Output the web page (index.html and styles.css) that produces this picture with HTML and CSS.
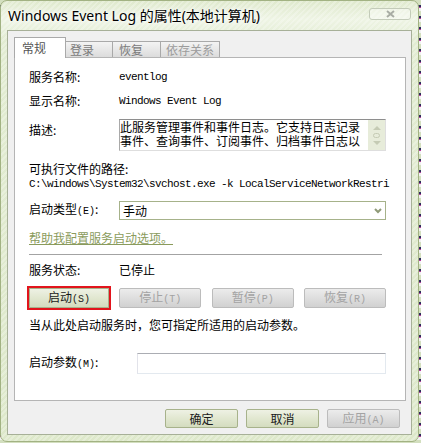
FILE: index.html
```html
<!DOCTYPE html>
<html lang="zh-CN">
<head>
    <meta charset="UTF-8">
    <meta name="viewport" content="width=device-width, initial-scale=1.0">
    <title>Windows Event Log 的属性(本地计算机)</title>
    <link rel="stylesheet" href="styles.css">
</head>
<body>

<div class="window">
    <div class="titlebar">
        <span class="title">Windows Event Log 的属性(本地计算机)</span>
        <span class="close-btn">
            <svg width="9" height="8" viewBox="0 0 9 8"><path d="M1 1 L8 7 M8 1 L1 7" stroke="#a8aca4" stroke-width="2" fill="none"/></svg>
        </span>
    </div>

    <div class="dialog">
        <div class="tabs">
            <div class="tab active">常规</div>
            <div class="tab tab-logon">登录</div>
            <div class="tab tab-recover">恢复</div>
            <div class="tab tab-deps">依存关系</div>
        </div>

        <div class="tab-panel">
            <div class="row">
                <span class="label">服务名称:</span>
                <span class="mono">eventlog</span>
            </div>
            <div class="row gap12">
                <span class="label">显示名称:</span>
                <span class="mono">Windows Event Log</span>
            </div>
            <div class="row desc-row gap12">
                <span class="label desc-label">描述:</span>
                <div class="desc-box">
                    <div class="desc-text">此服务管理事件和事件日志。它支持日志记录<br>事件、查询事件、订阅事件、归档事件日志以</div>
                    <div class="scrollbar">
                        <span class="arrow-up"></span>
                        <span class="grip"></span>
                        <span class="arrow-down"></span>
                    </div>
                </div>
            </div>

            <div class="path-label">可执行文件的路径:</div>
            <div class="path mono">C:\windows\System32\svchost.exe -k LocalServiceNetworkRestri</div>

            <div class="row type-row">
                <span class="label">启动类型<span class="acc">(E)</span>:</span>
                <div class="select">
                    <span>手动</span>
                    <svg width="8" height="6" viewBox="0 0 8 6"><path d="M1 1 L4 4 L7 1" stroke="#8f9a78" stroke-width="2" fill="none"/></svg>
                </div>
            </div>

            <div class="help-link">帮助我配置服务启动选项。</div>

            <div class="separator"></div>

            <div class="row status-row">
                <span class="label">服务状态:</span>
                <span>已停止</span>
            </div>

            <div class="service-buttons">
                <button class="btn btn-start">启动<span class="acc">(S)</span></button>
                <button class="btn" disabled>停止<span class="acc">(T)</span></button>
                <button class="btn" disabled>暂停<span class="acc">(P)</span></button>
                <button class="btn" disabled>恢复<span class="acc">(R)</span></button>
            </div>

            <div class="hint">当从此处启动服务时，您可指定所适用的启动参数。</div>

            <div class="row param-row">
                <span class="label param-label">启动参数<span class="acc">(M)</span>:</span>
                <input type="text" class="param-input">
            </div>
        </div>

        <div class="dialog-buttons">
            <button class="btn btn-small">确定</button>
            <button class="btn btn-small">取消</button>
            <button class="btn btn-small" disabled>应用<span class="acc">(A)</span></button>
        </div>
    </div>
</div>

</body>
</html>
```

FILE: styles.css
```css
/* Win7 style service properties dialog */
body {
    margin: 0;
    width: 421px;
    height: 443px;
    overflow: hidden;
    font-family: "Noto Sans CJK SC", sans-serif;
    font-size: 12px;
    color: #000;
    background: repeating-linear-gradient(to bottom, #d3dfbf 0, #d3dfbf 5px, #2e2e5c 5px, #2e2e5c 7px, #b43c9c 7px, #b43c9c 8px, #f2f2f2 8px, #f2f2f2 11px);
}

.window {
    box-sizing: border-box;
    width: 419px;
    height: 442px;
    padding: 0 6px 6px 6px;
    border: 1px solid #a2b283;
    border-radius: 7px;
    display: flex;
    flex-direction: column;
    background:
        repeating-linear-gradient(135deg, rgba(255, 255, 255, 0.25) 0, rgba(255, 255, 255, 0.25) 2px, transparent 2px, transparent 4px),
        linear-gradient(to bottom, #dfe9cd 0, #eef4e4 18px, #e2ecd2 40px, #dde8ca 100%);
}

.titlebar {
    height: 29px;
    flex-shrink: 0;
    display: flex;
    justify-content: space-between;
    align-items: flex-start;
}

.title {
    margin: 5px 0 0 1px;
    font-family: "Noto Sans", "Noto Sans CJK SC", sans-serif;
    font-size: 14px;
    line-height: 19px;
    color: #000;
    text-shadow: 0 0 6px #fff, 0 0 3px #fff;
}

.close-btn {
    box-sizing: border-box;
    width: 42px;
    height: 12px;
    margin: 7px 1px 0 0;
    border: 1px solid #c3cbb9;
    border-radius: 3px;
    background: rgba(255, 255, 255, 0.35);
    display: flex;
    justify-content: center;
    align-items: center;
}

.dialog {
    flex: 1;
    border: 1px solid #a7b098;
    background-color: #f0f0f0;
    padding: 6px 5px 6px 6px;
    display: flex;
    flex-direction: column;
}

/* tabs */
.tabs {
    display: flex;
    align-items: flex-end;
    height: 20px;
    position: relative;
    z-index: 1;
}

.tab {
    box-sizing: border-box;
    height: 16px;
    margin-left: -1px;
    padding-left: 5px;
    border: 1px solid #a9a9a9;
    border-bottom: none;
    background: linear-gradient(to bottom, #f3f3f3, #dcdcdc);
    color: #7a7a7a;
    line-height: 16px;
}

.tab.active {
    width: 52px;
    height: 21px;
    margin-left: 0;
    margin-bottom: -1px;
    padding-left: 7px;
    background: #fff;
    color: #555;
    line-height: 19px;
}

.tab-logon {
    width: 48px;
    padding-left: 4px;
}

.tab-recover {
    width: 49px;
    padding-left: 6px;
}

.tab-deps {
    width: 60px;
    color: #9c9c9c;
}

.tab-panel {
    box-sizing: border-box;
    height: 344px;
    border: 1px solid #b5b5b5;
    background-color: #fff;
    padding: 13px 19px 0 14px;
}

/* rows */
.row {
    display: flex;
    align-items: center;
    height: 12px;
    line-height: 12px;
}

.gap12 {
    margin-top: 12px;
}

.label {
    width: 90px;
    flex-shrink: 0;
}

.mono, .acc {
    font-family: "Liberation Mono", monospace;
    font-size: 11px;
    letter-spacing: -0.6px;
    white-space: nowrap;
}

.acc {
    font-size: 10px;
    letter-spacing: 0;
}

.desc-row {
    height: 32px;
    align-items: flex-start;
}

.desc-label {
    padding-top: 5px;
}

.desc-box {
    box-sizing: border-box;
    width: 267px;
    height: 32px;
    border: 1px solid;
    border-color: #8e8e8e #dedede #dedede #a9a9a9;
    display: flex;
    justify-content: space-between;
}

.desc-text {
    line-height: 14px;
    white-space: nowrap;
}

.scrollbar {
    width: 17px;
    flex-shrink: 0;
    background-color: #e7ecda;
    display: flex;
    flex-direction: column;
    align-items: center;
    justify-content: center;
    gap: 3px;
}

.arrow-up, .arrow-down {
    width: 0;
    height: 0;
    border-left: 4px solid transparent;
    border-right: 4px solid transparent;
}

.arrow-up {
    border-bottom: 4px solid #c5cbb4;
}

.arrow-down {
    border-top: 4px solid #c5cbb4;
}

.grip {
    box-sizing: border-box;
    width: 7px;
    height: 5px;
    border: 1px solid #c5cbb4;
    border-radius: 3px;
}

.path-label {
    margin-top: 12px;
    line-height: 12px;
}

.path {
    margin-top: 3px;
    line-height: 12px;
}

.type-row {
    margin-top: 11px;
    height: 19px;
}

.select {
    box-sizing: border-box;
    width: 267px;
    height: 19px;
    border: 1px solid #a6b28a;
    padding: 0 3px 0 3px;
    display: flex;
    justify-content: space-between;
    align-items: center;
}

.help-link {
    margin-top: 12px;
    line-height: 12px;
    color: #8a9b5c;
    text-decoration: underline;
}

.separator {
    margin: 10px 4px 0 0;
    height: 1px;
    background-color: #a3a3a3;
}

.status-row {
    margin-top: 9px;
}

/* buttons */
.btn {
    box-sizing: border-box;
    height: 20px;
    padding: 0;
    border: 1px solid #a7b28b;
    border-radius: 2px;
    background: linear-gradient(to bottom, #eef1e4 0, #e1e7d0 50%, #d4dcbf 100%);
    font-family: "Noto Sans CJK SC", sans-serif;
    font-size: 12px;
    line-height: 16px;
    color: #1a1a1a;
}

.btn:disabled {
    border-color: #bcbcbc;
    background: linear-gradient(to bottom, #ececec 0, #dedede 50%, #d1d1d1 100%);
    color: #a3a3a3;
}

.service-buttons {
    margin-top: 12px;
    display: flex;
    justify-content: space-between;
}

.service-buttons .btn {
    width: 82px;
}

.service-buttons .btn-start {
    width: 80px;
    border-radius: 0;
    outline: 2px solid #e2141c;
}

.hint {
    margin-top: 11px;
    line-height: 12px;
}

.param-row {
    margin-top: 22px;
    height: 21px;
}

.param-label {
    width: 108px;
}

.param-input {
    box-sizing: border-box;
    width: 249px;
    height: 21px;
    margin: 0;
    border: 1px solid;
    border-color: #abadb3 #e3e9ef #e3e9ef #e2e3ea;
    background-color: #fff;
}

.dialog-buttons {
    margin-top: 8px;
    padding-right: 6px;
    display: flex;
    justify-content: flex-end;
    gap: 8px;
}

.btn-small {
    width: 73px;
    height: 19px;
    line-height: 15px;
}
```
